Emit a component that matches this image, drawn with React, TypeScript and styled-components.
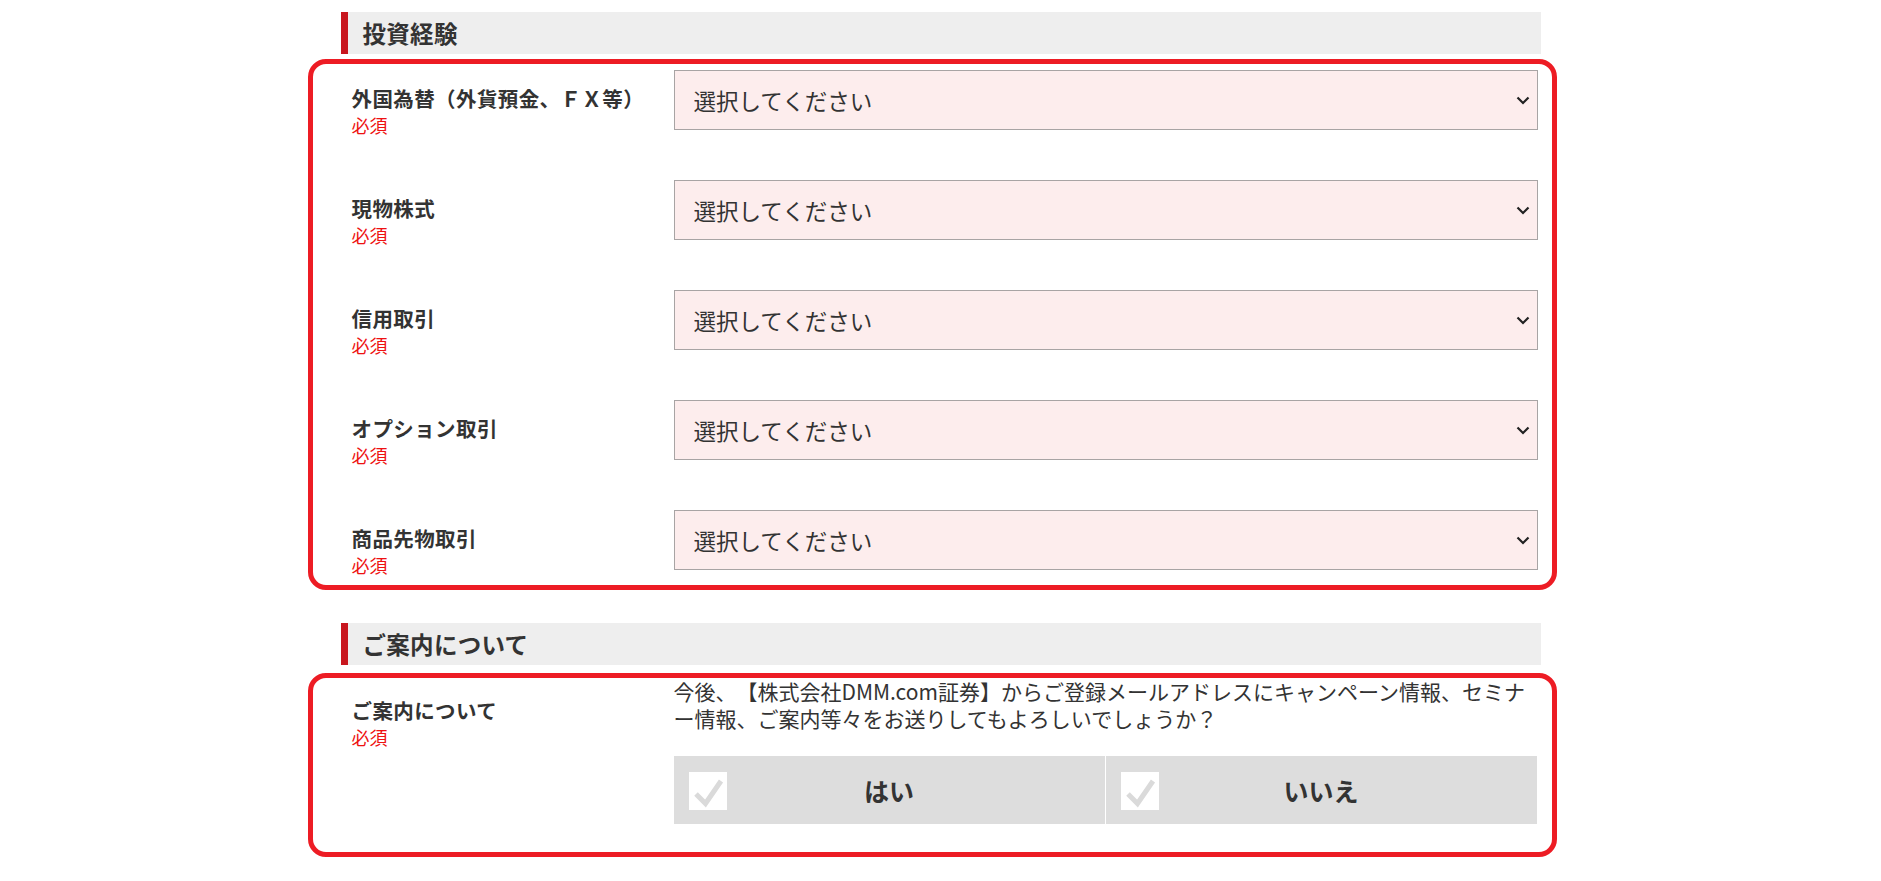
import React from "react";
import styled, { createGlobalStyle } from "styled-components";

const GlobalStyle = createGlobalStyle`
  html, body { margin: 0; padding: 0; background: #fff; }
  body {
    font-family: "Noto Sans CJK JP", "Noto Sans", sans-serif;
    color: #333;
    text-spacing-trim: space-all;
  }
  select, p, div, label { text-spacing-trim: space-all; }
`;

const Page = styled.div`
  width: 1200px;
  margin: 0 auto;
  padding-top: 12px;
`;

const Heading = styled.h2<{ $top?: number }>`
  margin: ${(p) => p.$top ?? 0}px 0 0;
  height: 42px;
  box-sizing: border-box;
  background: #eeeeee;
  border-left: 7px solid #c8161e;
  padding-left: 15px;
  display: flex;
  align-items: center;
  font-size: 23.5px;
  font-weight: 700;
  color: #333;
  letter-spacing: 0.3px;
`;

const RedBox = styled.div<{ $gap: number; $pt: number; $pb: number }>`
  margin: ${(p) => p.$gap}px -16px 0 -33px;
  border: 5px solid #ed1c24;
  border-radius: 18px;
  padding: ${(p) => p.$pt}px 14px ${(p) => p.$pb}px 39px;
  display: flex;
  flex-direction: column;
  gap: 42px;
`;

const Row = styled.div<{ $h?: number }>`
  display: grid;
  grid-template-columns: 322px 1fr;
  min-height: ${(p) => p.$h ?? 68}px;
`;

const LabelCell = styled.div<{ $pt: number }>`
  padding-top: ${(p) => p.$pt}px;
  display: flex;
  flex-direction: column;
`;

const LabelText = styled.div`
  font-size: 20.5px;
  font-weight: 700;
  line-height: 30px;
  color: #333;
  letter-spacing: 0.4px;
`;

const Required = styled.div`
  font-size: 18px;
  line-height: 25px;
  color: #ee1111;
`;

const SelectWrap = styled.div`
  position: relative;
  height: 60px;
`;

const Select = styled.select`
  appearance: none;
  -webkit-appearance: none;
  width: 100%;
  height: 60px;
  box-sizing: border-box;
  border: 1px solid #a8a4a4;
  border-radius: 0;
  background: #fdeded;
  padding: 0 40px 0 19px;
  font-family: "Noto Sans CJK JP", "Noto Sans", sans-serif;
  font-size: 22.5px;
  color: #333;
  outline: none;
`;

const Chevron = styled.svg`
  position: absolute;
  right: 8px;
  top: 50%;
  margin-top: -4px;
  width: 14px;
  height: 9px;
  pointer-events: none;
`;

const Field = styled.div`
  display: flex;
  flex-direction: column;
`;

const Notice = styled.p`
  margin: 0;
  font-size: 21px;
  line-height: 27px;
  color: #333;
`;

const Choices = styled.div`
  margin-top: 24px;
  display: grid;
  grid-template-columns: 1fr 1fr;
  gap: 1px;
  width: 863px;
`;

const Choice = styled.label`
  position: relative;
  height: 68px;
  background: #dddddd;
  display: flex;
  align-items: center;
  justify-content: center;
  font-size: 25px;
  font-weight: 700;
  color: #333;
  cursor: pointer;
`;

const CheckBox = styled.span`
  position: absolute;
  left: 15px;
  top: 16px;
  width: 38px;
  height: 38px;
  background: #fff;
  display: flex;
`;

const ChevronIcon = () => (
  <Chevron viewBox="0 0 14 9">
    <path d="M1.5 1.5 L7 7 L12.5 1.5" fill="none" stroke="#222" strokeWidth="2.2" />
  </Chevron>
);

const CheckIcon = () => (
  <svg viewBox="0 0 38 38" width="38" height="38">
    <path d="M7 22 L16.5 31.5 L32 9" fill="none" stroke="#dadada" strokeWidth="5" />
  </svg>
);

const experience = [
  "外国為替（外貨預金、ＦＸ等）",
  "現物株式",
  "信用取引",
  "オプション取引",
  "商品先物取引",
];

export default function App() {
  return (
    <>
      <GlobalStyle />
      <Page>
        <Heading>投資経験</Heading>
        <RedBox $gap={5} $pt={6} $pb={7}>
          {experience.map((label) => (
            <Row key={label}>
              <LabelCell $pt={13}>
                <LabelText>{label}</LabelText>
                <Required>必須</Required>
              </LabelCell>
              <SelectWrap>
                <Select defaultValue="">
                  <option value="">選択してください</option>
                  <option value="none">なし</option>
                  <option value="1">1年未満</option>
                  <option value="3">1年以上3年未満</option>
                  <option value="5">3年以上</option>
                </Select>
                <ChevronIcon />
              </SelectWrap>
            </Row>
          ))}
        </RedBox>

        <Heading $top={33}>ご案内について</Heading>
        <RedBox $gap={8} $pt={0} $pb={28}>
          <Row $h={0}>
            <LabelCell $pt={17}>
              <LabelText>ご案内について</LabelText>
              <Required>必須</Required>
            </LabelCell>
            <Field>
              <Notice>
                今後、【株式会社DMM.com証券】からご登録メールアドレスにキャンペーン情報、セミナー情報、ご案内等々をお送りしてもよろしいでしょうか？
              </Notice>
              <Choices>
                <Choice>
                  <CheckBox>
                    <CheckIcon />
                  </CheckBox>
                  はい
                </Choice>
                <Choice>
                  <CheckBox>
                    <CheckIcon />
                  </CheckBox>
                  いいえ
                </Choice>
              </Choices>
            </Field>
          </Row>
        </RedBox>
      </Page>
    </>
  );
}
